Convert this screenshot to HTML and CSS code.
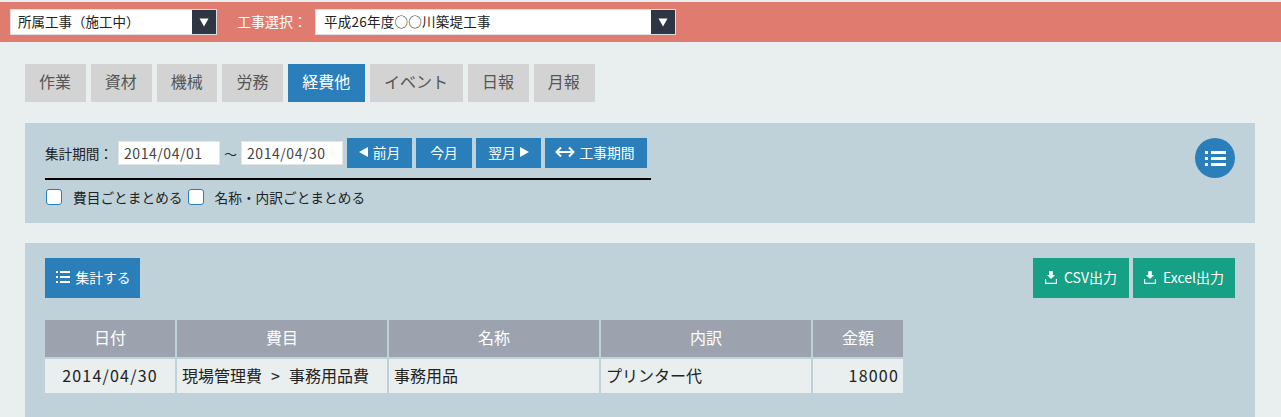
FILE: index.html
```html
<!DOCTYPE html>
<html lang="ja">
<head>
<meta charset="utf-8">
<title>経費他</title>
<link rel="stylesheet" href="styles.css">
</head>
<body>
<header class="topbar">
  <div class="select select-a"><span class="select-text">所属工事（施工中）</span><span class="select-arrow"><svg width="10" height="10" viewBox="0 0 10 10"><path d="M0.5 1.5H9.5L5 9.5Z" fill="#fff"/></svg></span></div>
  <label class="top-label">工事選択：</label>
  <div class="select select-b"><span class="select-text">平成26年度○○川築堤工事</span><span class="select-arrow"><svg width="10" height="10" viewBox="0 0 10 10"><path d="M0.5 1.5H9.5L5 9.5Z" fill="#fff"/></svg></span></div>
</header>
<main class="content">
  <nav class="tabs">
    <a class="tab">作業</a><a class="tab">資材</a><a class="tab">機械</a><a class="tab">労務</a><a class="tab active">経費他</a><a class="tab">イベント</a><a class="tab">日報</a><a class="tab">月報</a>
  </nav>
  <section class="panel filter">
    <div class="filter-main">
      <div class="period">
        <span class="period-label">集計期間：</span>
        <span class="date">2014/04/01</span>
        <span class="tilde">～</span>
        <span class="date">2014/04/30</span>
        <a class="btn btn-prev"><svg width="9" height="10" viewBox="0 0 9 10"><path d="M9 0V10L0 5Z" fill="#fff"/></svg>前月</a>
        <a class="btn btn-now">今月</a>
        <a class="btn btn-next">翌月<svg width="9" height="10" viewBox="0 0 9 10"><path d="M0 0V10L9 5Z" fill="#fff"/></svg></a>
        <a class="btn btn-term"><svg width="20" height="12" viewBox="0 0 20 12"><path d="M6 1.5L1.5 6L6 10.5M14 1.5L18.5 6L14 10.5M2 6H18" fill="none" stroke="#fff" stroke-width="2"/></svg>工事期間</a>
      </div>
      <div class="options">
        <label class="check"><span class="box"></span><span class="check-text">費目ごとまとめる</span></label>
        <label class="check check-second"><span class="box"></span><span class="check-text">名称・内訳ごとまとめる</span></label>
      </div>
    </div>
    <a class="round-btn"><svg width="21" height="15" viewBox="0 0 21 15"><path d="M0 0H3V3H0ZM6 0H21V3H6ZM0 6H3V9H0ZM6 6H21V9H6ZM0 12H3V15H0ZM6 12H21V15H6Z" fill="#fff"/></svg></a>
  </section>
  <section class="panel result">
    <div class="actions">
      <a class="btn btn-sum"><svg width="14" height="12" viewBox="0 0 14 12"><path d="M0 0H2V2H0ZM4 0H14V2H4ZM0 5H2V7H0ZM4 5H14V7H4ZM0 10H2V12H0ZM4 10H14V12H4Z" fill="#fff"/></svg>集計する</a>
      <div class="exports">
        <a class="btn btn-green btn-csv"><svg class="dl" width="12" height="13" viewBox="0 0 12 13"><path d="M4.2 0H7.8V4H10L6 8L2 4H4.2Z" fill="#fff"/><path d="M0.6 8V12.4H11.4V8" fill="none" stroke="#fff" stroke-width="1.1"/></svg>CSV出力</a>
        <a class="btn btn-green btn-xls"><svg class="dl" width="12" height="13" viewBox="0 0 12 13"><path d="M4.2 0H7.8V4H10L6 8L2 4H4.2Z" fill="#fff"/><path d="M0.6 8V12.4H11.4V8" fill="none" stroke="#fff" stroke-width="1.1"/></svg>Excel出力</a>
      </div>
    </div>
    <table class="data">
      <thead>
        <tr><th class="c-date">日付</th><th class="c-wide">費目</th><th class="c-wide">名称</th><th class="c-wide">内訳</th><th class="c-amt">金額</th></tr>
      </thead>
      <tbody>
        <tr><td class="center num">2014/04/30</td><td class="path">現場管理費 &gt; 事務用品費</td><td>事務用品</td><td>プリンター代</td><td class="right num">18000</td></tr>
      </tbody>
    </table>
  </section>
</main>
</body>
</html>
```
FILE: styles.css
```css
* { box-sizing: border-box; }
html, body { margin: 0; height: 100%; }
body {
  background: #e9eeef;
  font-family: "Noto Sans CJK JP", "Noto Sans", sans-serif;
  color: #222;
  overflow: hidden;
  padding-top: 2px;
}
.topbar {
  height: 40px;
  background: #e07b70;
  display: flex;
  align-items: center;
  padding: 0 10px;
  font-size: 14px;
}
.select {
  height: 26px;
  background: #fff;
  border: 1px solid #ddd;
  display: flex;
  align-items: center;
  justify-content: space-between;
  color: #222;
}
.select-a { width: 207px; padding-left: 7px; }
.select-b { width: 361px; padding-left: 8px; }
.select-text { line-height: 22px; height: 24px; font-size: 13.5px; }
.select-b .select-text { letter-spacing: .25px; }
.select-arrow {
  width: 24px;
  height: 24px;
  background: #2f3643;
  display: flex;
  align-items: center;
  justify-content: center;
}
.top-label {
  color: #fff;
  width: 98px;
  padding-left: 20px;
  padding-bottom: 2px;
  font-size: 14px;
}
.content { padding: 22px 26px 0 25px; }
.tabs { display: flex; gap: 5px; }
.tab {
  height: 38px;
  padding: 0 14.8px 0 14px;
  background: #d3d3d3;
  color: #555;
  font-size: 16px;
  line-height: 35px;
  display: block;
}
.tab.active { background: #2a7fba; color: #fff; }
.panel { background: #bfd2da; }
.filter {
  margin-top: 21px;
  height: 100px;
  padding: 15px 20px 0;
  display: flex;
  justify-content: space-between;
  align-items: flex-start;
}
.filter-main { width: 606px; }
.period {
  display: flex;
  align-items: center;
  height: 42px;
  padding-bottom: 10px;
  border-bottom: 2px solid #000;
  font-size: 13.6px;
}
.period-label { width: 73px; color: #222; padding-bottom: 1px; }
.date {
  width: 102px;
  height: 24px;
  background: #fff;
  border: 1px solid #e4e4e4;
  padding-left: 5px;
  line-height: 22px;
  font-size: 14px;
  letter-spacing: .55px;
  color: #444;
}
.tilde { width: 21px; text-align: center; font-size: 13px; }
.btn {
  height: 30px;
  padding-bottom: 2px;
  background: #2a7fba;
  color: #fff;
  display: flex;
  align-items: center;
  justify-content: center;
  font-size: 13.8px;
}
.btn-prev { width: 65px; margin-left: 4px; gap: 5px; }
.btn-now { width: 56px; margin-left: 4px; }
.btn-next { width: 65px; margin-left: 4px; gap: 4px; }
.btn-term { width: 102px; margin-left: 4px; gap: 4px; padding-right: 2px; }
.options {
  display: flex;
  align-items: center;
  margin-top: 7px;
  font-size: 13.7px;
  color: #222;
}
.check { display: flex; align-items: center; }
.box {
  width: 16px;
  height: 16px;
  margin-left: 1px;
  background: #fff;
  border: 1px solid #2a7fba;
  border-radius: 3px;
}
.check-text { margin-left: 11px; }
.check-second { margin-left: 4px; }
.round-btn {
  width: 40px;
  height: 40px;
  border-radius: 50%;
  background: #2a7fba;
  display: flex;
  align-items: center;
  justify-content: center;
}
.result {
  margin-top: 20px;
  height: 174px;
  padding: 15px 20px 0;
}
.actions { display: flex; justify-content: space-between; }
.actions .btn { height: 40px; }
.btn-sum { width: 95px; gap: 5px; padding-left: 2px; }
.exports { display: flex; gap: 4px; }
.btn-green { background: #16a085; gap: 7px; font-size: 14px; }
.btn-csv { width: 96px; }
.btn-xls { width: 102px; }
.data {
  border-collapse: separate;
  border-spacing: 2px;
  margin: 20px 0 0 -2px;
  table-layout: fixed;
  width: 862px;
}
.c-date { width: 130px; }
.c-wide { width: 210px; }
.c-amt { width: 90px; }
.data th {
  height: 37px;
  padding: 0 0 4px;
  background: #9ca3af;
  color: #fff;
  font-weight: 400;
  font-size: 16px;
}
.data td {
  height: 34px;
  padding: 0 5px 3px;
  background: #e9eeef;
  color: #222;
  font-size: 16px;
  white-space: nowrap;
}
.data td.path { word-spacing: 5.5px; }
.data td.num { letter-spacing: 1.2px; }
.data td.center { text-align: center; }
.data td.right { text-align: right; padding-right: 4px; }
```
